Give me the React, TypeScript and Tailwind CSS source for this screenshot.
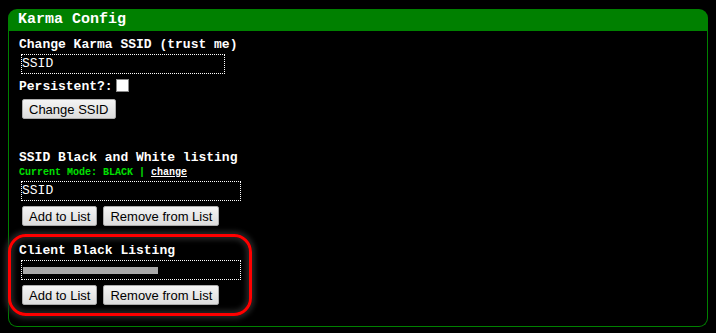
const mono = "font-['Liberation_Mono','Courier_New',monospace]"

function Btn({ label }: { label: string }) {
  return (
    <button className="h-[20px] px-[6px] text-[13px] leading-none text-black font-['Liberation_Sans',Arial,sans-serif] bg-gradient-to-b from-[#f4f4f4] to-[#dcdcdc] border border-[#acacac] rounded-[2px]">
      {label}
    </button>
  )
}

function Field({ width, children }: { width: string; children?: React.ReactNode }) {
  return (
    <div className={`ml-[2px] mt-[2px] h-[20px] ${width} border border-dotted border-white bg-black flex items-center text-[13px] text-white ${mono}`}>
      {children}
    </div>
  )
}

function Title({ text, className = "" }: { text: string; className?: string }) {
  return <div className={`text-[13px] leading-[15px] font-bold text-white ${mono} ${className}`}>{text}</div>
}

export default function App() {
  return (
    <div className="relative w-[716px] h-[333px] bg-black overflow-hidden pt-[9px] px-[8px]">
      <div className="w-[700px]">
        <div className={`h-[22px] rounded-t-[9px] bg-[#008000] pl-[10px] text-[15px] leading-[22px] font-bold text-white ${mono}`}>
          Karma Config
        </div>
        <div className="border-x border-b border-[#008000] rounded-b-[9px] px-[10px] pt-[6px] pb-[21px]">
          <Title text="Change Karma SSID (trust me)" />
          <Field width="w-[204px]">SSID</Field>
          <div className={`mt-[5px] h-[15px] flex items-end gap-[3px] text-[13px] leading-[15px] font-bold text-white ${mono}`}>
            <span>Persistent?:</span>
            <span className="mb-[2px] w-[13px] h-[13px] bg-white border border-[#888]" />
          </div>
          <div className="mt-[5px] ml-[3px] flex">
            <Btn label="Change SSID" />
          </div>

          <Title text="SSID Black and White listing" className="mt-[31px]" />
          <div className={`mt-[2px] text-[10px] leading-[12px] font-bold text-[#00e000] ${mono}`}>
            Current Mode: BLACK | <span className="text-white underline">change</span>
          </div>
          <Field width="w-[220px]">SSID</Field>
          <div className="mt-[5px] ml-[3px] flex gap-[6px]">
            <Btn label="Add to List" />
            <Btn label="Remove from List" />
          </div>

          <Title text="Client Black Listing" className="mt-[17px]" />
          <Field width="w-[220px]">
            <span className="ml-[1px] w-[135px] h-[7px] bg-[#a8a8a8]" />
          </Field>
          <div className="mt-[5px] ml-[3px] flex gap-[6px]">
            <Btn label="Add to List" />
            <Btn label="Remove from List" />
          </div>
        </div>
      </div>

      {/* red annotation ring */}
      <div className="absolute left-[8px] top-[234px] w-[244px] h-[82px] rounded-[18px] border-[3px] border-[#ff0000] shadow-[0_0_5px_3px_rgba(40,40,40,0.9),inset_0_0_5px_3px_rgba(40,40,40,0.9)]" />
    </div>
  )
}
